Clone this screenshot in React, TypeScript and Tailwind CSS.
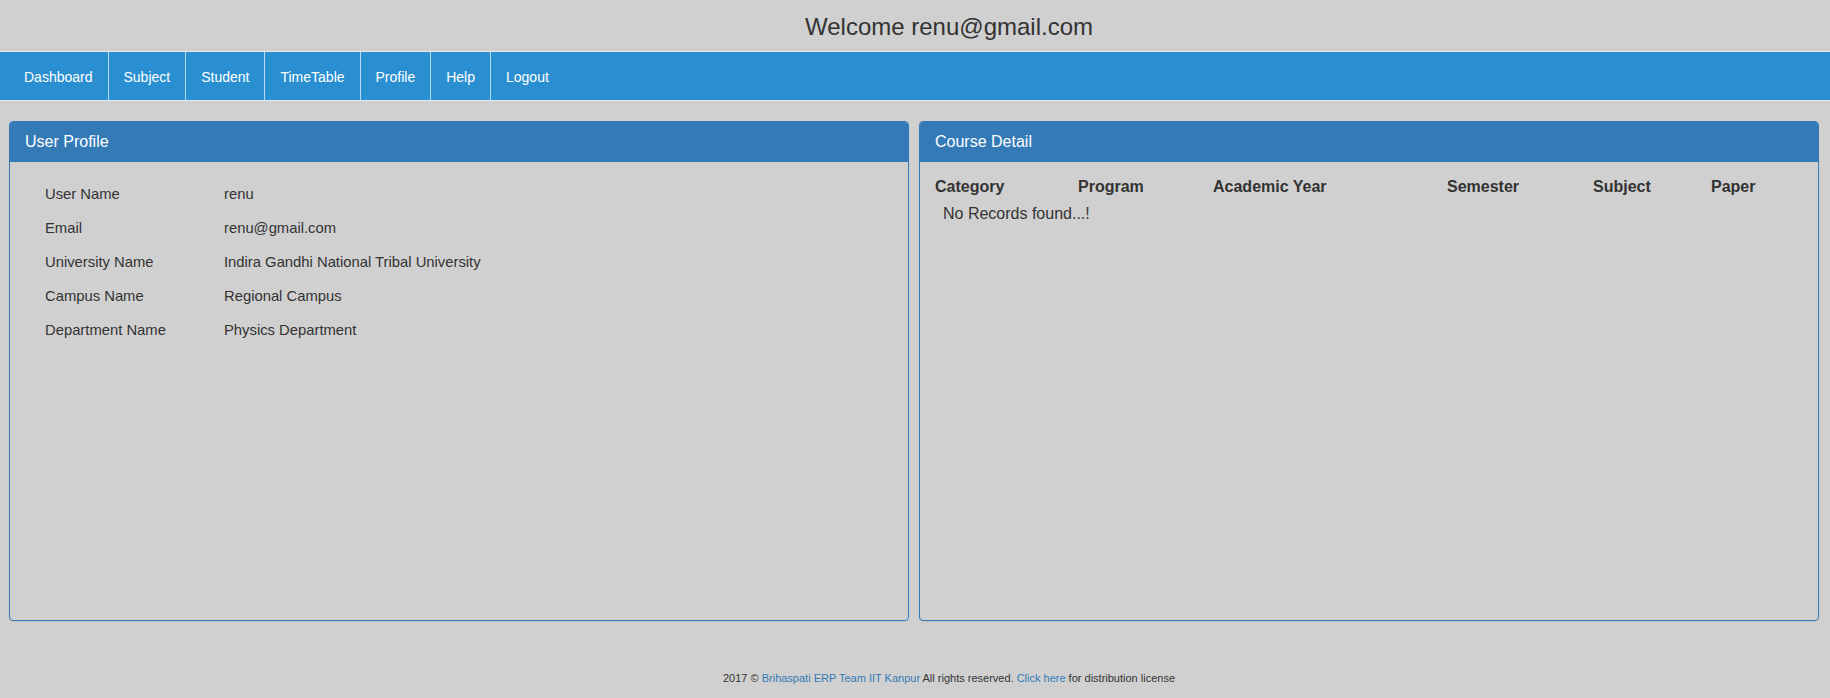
import React from "react";

const navItems = ["Dashboard", "Subject", "Student", "TimeTable", "Profile", "Help", "Logout"];

const profileRows: [string, string][] = [
  ["User Name", "renu"],
  ["Email", "renu@gmail.com"],
  ["University Name", "Indira Gandhi National Tribal University"],
  ["Campus Name", "Regional Campus"],
  ["Department Name", "Physics Department"],
];

const courseCols: { label: string; w: string }[] = [
  { label: "Category", w: "w-[143px]" },
  { label: "Program", w: "w-[135px]" },
  { label: "Academic Year", w: "w-[234px]" },
  { label: "Semester", w: "w-[146px]" },
  { label: "Subject", w: "w-[118px]" },
  { label: "Paper", w: "flex-1" },
];

function Panel({ title, children }: { title: string; children: React.ReactNode }) {
  return (
    <div className="flex h-[500px] flex-col rounded-[4px] border border-[#337ab7] shadow-[0_1px_1px_rgba(0,0,0,0.08)]">
      <div className="h-[40px] shrink-0 rounded-t-[3px] border-b border-[#337ab7] bg-[#337ab7] px-[15px] text-[16px] leading-[40px] text-white">
        {title}
      </div>
      {children}
    </div>
  );
}

export default function App() {
  return (
    <div
      className="min-h-[698px] bg-[#d0d0d0] text-[#333]"
      style={{ fontFamily: '"Liberation Sans", Arial, sans-serif' }}
    >
      {/* heading */}
      <div className="h-[51px] pl-[68px] pt-[14px] text-center text-[24px] leading-[26px]">
        Welcome renu@gmail.com
      </div>

      {/* top nav */}
      <nav className="flex h-[50px] border-y border-[#e4e9ee] bg-[#2a8fd0] pl-[9px]">
        {navItems.map((item, idx) => (
          <div
            key={item}
            className={
              "-mb-[2px] flex h-[50px] items-center px-[15px] text-[14px] text-white " +
              (idx < navItems.length - 1 ? "border-r border-[#b7d8ee]" : "")
            }
          >
            {item}
          </div>
        ))}
      </nav>

      {/* panels */}
      <div className="grid grid-cols-2 gap-[10px] pl-[9px] pr-[11px] pt-[20px]">
        <Panel title="User Profile">
          <div className="p-[15px] text-[14.8px] leading-[20px]">
            {profileRows.map(([label, value]) => (
              <div key={label} className="flex py-[7px]">
                <div className="w-[199px] pl-[20px]">{label}</div>
                <div>{value}</div>
              </div>
            ))}
          </div>
        </Panel>

        <Panel title="Course Detail">
          <div className="px-[15px] pt-[13px] text-[16px] leading-[23px]">
            <div className="flex font-bold">
              {courseCols.map((c) => (
                <div key={c.label} className={c.w}>
                  {c.label}
                </div>
              ))}
            </div>
            <div className="mt-[4px] pl-[8px]">No Records found...!</div>
          </div>
        </Panel>
      </div>

      {/* footer */}
      <div className="pl-[68px] pt-[50px] text-center text-[11px] leading-[14px]">
        2017 &copy; <span className="text-[#337ab7]">Brihaspati ERP Team IIT Kanpur</span> All rights
        reserved. <span className="text-[#337ab7]">Click here</span> for distribution license
      </div>
    </div>
  );
}
